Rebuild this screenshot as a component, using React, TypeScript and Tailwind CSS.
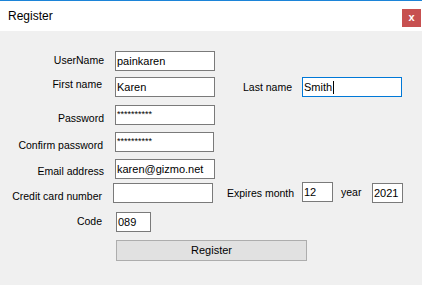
const font = { fontFamily: '"Liberation Sans", Arial, sans-serif' }

function Field({ value, className = '', focused = false, children }: { value?: string; className?: string; focused?: boolean; children?: React.ReactNode }) {
  return (
    <div
      className={`flex items-center shrink-0 h-[20px] bg-white border pl-[1px] text-[11px] leading-[13px] text-black whitespace-nowrap overflow-hidden ${
        focused ? 'border-[#0078d7]' : 'border-[#7a7a7a]'
      } ${className}`}
    >
      {value}
      {children}
    </div>
  )
}

function Label({ text, className = '' }: { text: string; className?: string }) {
  return <div className={`shrink-0 text-[10.5px] leading-[13px] text-black whitespace-nowrap ${className}`}>{text}</div>
}

export default function App() {
  return (
    <div className="w-[422px] h-[285px] bg-[#f0f0f0] overflow-hidden" style={font}>
      {/* Title bar */}
      <div className="h-[31px] bg-white border-t border-[#1c84d8] flex items-start justify-between">
        <div className="pl-[8px] pt-[8px] text-[12px] leading-[14px] text-black">Register</div>
        <div className="mt-[8px] mr-[1px] w-[19px] h-[18px] bg-[#c75050] flex items-center justify-center text-white text-[11px] font-bold leading-none pb-[2px]">
          x
        </div>
      </div>

      {/* Form */}
      <div className="flex flex-col">
        <div className="flex items-start mt-[20px]">
          <Label text="UserName" className="w-[104px] text-right pt-[3px]" />
          <Field value="painkaren" className="ml-[11px] w-[100px]" />
        </div>

        <div className="flex items-start mt-[6px]">
          <Label text="First name" className="w-[102px] text-right pt-[1px]" />
          <Field value="Karen" className="ml-[13px] w-[100px]" />
          <Label text="Last name" className="ml-[28px] w-[59px] pt-[4px]" />
          <Field value="Smith" focused className="w-[100px]">
            <span className="inline-block w-px h-[13px] bg-black ml-[1px]" />
          </Field>
        </div>

        <div className="flex items-start mt-[8px]">
          <Label text="Password" className="w-[104px] text-right pt-[7px]" />
          <Field value="**********" className="ml-[11px] w-[100px] !items-start pt-[2px] !text-[9px]" />
        </div>

        <div className="flex items-start mt-[7px]">
          <Label text="Confirm password" className="w-[103px] text-right pt-[7px]" />
          <Field value="**********" className="ml-[12px] w-[99px] !items-start pt-[2px] !text-[9px]" />
        </div>

        <div className="flex items-start mt-[7px]">
          <Label text="Email address" className="w-[104px] text-right pt-[6px]" />
          <Field value="karen@gizmo.net" className="ml-[11px] w-[100px]" />
        </div>

        <div className="flex items-start mt-[4px]">
          <Label text="Credit card number" className="w-[102px] text-right pt-[7px]" />
          <Field className="ml-[11px] w-[100px]" />
          <Label text="Expires month" className="ml-[14px] w-[75px] pt-[4px]" />
          <Field value="12" className="w-[31px] -mt-[1px]" />
          <Label text="year" className="ml-[8px] w-[31px] pt-[3px]" />
          <Field value="2021" className="w-[31px]" />
        </div>

        <div className="flex items-start mt-[9px]">
          <Label text="Code" className="w-[102px] text-right pt-[3px]" />
          <Field value="089" className="ml-[14px] w-[35px]" />
        </div>

        <div className="flex mt-[8px]">
          <div className="ml-[116px] w-[191px] h-[21px] bg-[#e1e1e1] border border-[#adadad] flex items-center justify-center text-[11px] leading-[13px] text-black">
            Register
          </div>
        </div>
      </div>
    </div>
  )
}
